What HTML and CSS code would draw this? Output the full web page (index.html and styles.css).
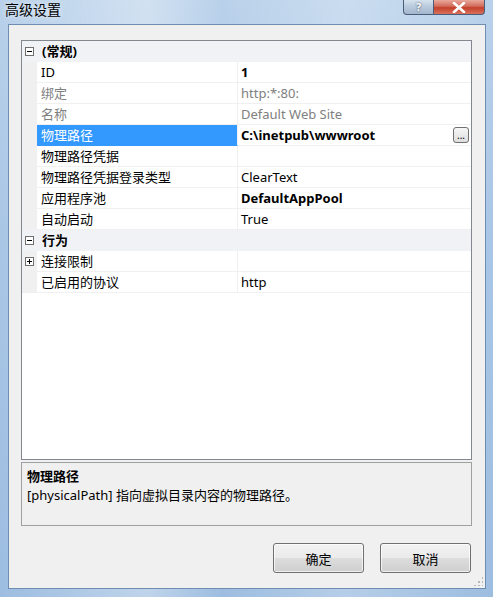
FILE: index.html
```html
<!DOCTYPE html>
<html lang="zh-CN">
<head>
<meta charset="utf-8">
<title>高级设置</title>
<link rel="stylesheet" href="styles.css">
</head>
<body>
<div class="window">
  <div class="titlebar">
    <span class="title">高级设置</span>
    <div class="caption-buttons">
      <div class="cap-btn help">?</div>
      <div class="cap-btn close">
        <svg width="14" height="11" viewBox="0 0 14 11"><path d="M2 1 L12 10 M12 1 L2 10" stroke="#fff" stroke-width="2.6" stroke-linecap="round"/></svg>
      </div>
    </div>
  </div>
  <div class="client">
    <div class="propgrid">
      <div class="row category">
        <div class="gutter"><span class="exp minus"></span></div>
        <div class="cat-label">(常规)</div>
      </div>
      <div class="row">
        <div class="gutter"></div>
        <div class="name">ID</div>
        <div class="value bold">1</div>
      </div>
      <div class="row dim">
        <div class="gutter"></div>
        <div class="name">绑定</div>
        <div class="value">http:*:80:</div>
      </div>
      <div class="row dim">
        <div class="gutter"></div>
        <div class="name">名称</div>
        <div class="value">Default Web Site</div>
      </div>
      <div class="row selected">
        <div class="gutter"></div>
        <div class="name">物理路径</div>
        <div class="value bold">C:\inetpub\wwwroot<span class="ellipsis">...</span></div>
      </div>
      <div class="row">
        <div class="gutter"></div>
        <div class="name">物理路径凭据</div>
        <div class="value"></div>
      </div>
      <div class="row">
        <div class="gutter"></div>
        <div class="name">物理路径凭据登录类型</div>
        <div class="value">ClearText</div>
      </div>
      <div class="row">
        <div class="gutter"></div>
        <div class="name">应用程序池</div>
        <div class="value bold">DefaultAppPool</div>
      </div>
      <div class="row">
        <div class="gutter"></div>
        <div class="name">自动启动</div>
        <div class="value">True</div>
      </div>
      <div class="row category">
        <div class="gutter"><span class="exp minus"></span></div>
        <div class="cat-label">行为</div>
      </div>
      <div class="row">
        <div class="gutter"><span class="exp plus"></span></div>
        <div class="name">连接限制</div>
        <div class="value"></div>
      </div>
      <div class="row">
        <div class="gutter"></div>
        <div class="name">已启用的协议</div>
        <div class="value">http</div>
      </div>
      <div class="grid-fill"></div>
    </div>
    <div class="description">
      <div class="desc-title">物理路径</div>
      <div class="desc-text">[physicalPath] 指向虚拟目录内容的物理路径。</div>
    </div>
    <div class="buttons">
      <button class="btn">确定</button>
      <button class="btn">取消</button>
    </div>
    <div class="grip"></div>
  </div>
</div>
</body>
</html>
```
FILE: styles.css
```css
html, body {
  margin: 0;
  padding: 0;
  width: 493px;
  height: 597px;
  overflow: hidden;
}
body {
  font-family: "Noto Sans", "Noto Sans CJK SC", sans-serif;
  font-size: 13px;
  color: #000;
  background: linear-gradient(to bottom, #b9d1ea 0%, #a9c6e6 40%, #9dbde0 100%);
}
.window {
  display: flex;
  flex-direction: column;
  height: 597px;
  background:
    linear-gradient(to right, rgba(255,255,255,0) 0%, rgba(255,255,255,0.35) 30%, rgba(255,255,255,0) 45%, rgba(255,255,255,0.25) 70%, rgba(255,255,255,0) 100%);
}
.titlebar {
  height: 24px;
  display: flex;
  align-items: flex-start;
  flex: none;
}
.title {
  padding-left: 5px;
  font-size: 14px;
  line-height: 19px;
  color: #000;
  font-family: "Noto Sans CJK SC", sans-serif;
  text-shadow: 0 0 6px rgba(255,255,255,0.9);
}
.caption-buttons {
  margin-left: auto;
  margin-right: 8px;
  display: flex;
}
.cap-btn {
  height: 15px;
  border: 1px solid #4a5d78;
  border-top: none;
  display: flex;
  align-items: center;
  justify-content: center;
  box-sizing: border-box;
}
.help {
  width: 31px;
  border-radius: 0 0 0 4px;
  background: linear-gradient(to bottom, #d6e2ef 0%, #b8c9dc 50%, #a3b6cc 100%);
  color: #fff;
  font-weight: bold;
  font-size: 11px;
  line-height: 14px;
  text-shadow: 0 0 2px #334;
}
.close {
  width: 51px;
  border-left: none;
  border-radius: 0 0 4px 0;
  background: linear-gradient(to bottom, #e9a99c 0%, #d16b5a 45%, #c4402b 55%, #d9715c 100%);
}
.client {
  flex: 1;
  margin: 0 7px 8px 8px;
  border: 1px solid #6f8db0;
  background: #f0f0f0;
  padding: 15px 13px 15px 12px;
  display: flex;
  flex-direction: column;
  position: relative;
}
.propgrid {
  height: 420px;
  box-sizing: border-box;
  border: 1px solid #828790;
  background: #fff;
  display: flex;
  flex-direction: column;
  flex: none;
}
.row {
  height: 21px;
  display: grid;
  grid-template-columns: 15px 201px 1fr;
  line-height: 20px;
  flex: none;
}
.gutter {
  background: #f0f0f0;
  display: flex;
  align-items: center;
  justify-content: center;
}
.name {
  padding-left: 4px;
  border-right: 1px solid #f0f0f0;
  border-bottom: 1px solid #f0f0f0;
  white-space: nowrap;
}
.value {
  padding-left: 3px;
  border-bottom: 1px solid #f0f0f0;
  white-space: nowrap;
  display: flex;
  align-items: center;
}
.bold { font-weight: bold; }
.dim .name, .dim .value { color: #808080; }
.selected .name {
  background: #3399ff;
  color: #fff;
  border-bottom-color: #3399ff;
}
.ellipsis {
  margin-left: auto;
  margin-right: 2px;
  width: 14px;
  height: 14px;
  border: 1px solid #707070;
  border-radius: 3px;
  background: linear-gradient(to bottom, #f6f6f6, #dedede);
  font-size: 10px;
  font-weight: normal;
  line-height: 14px;
  text-align: center;
  color: #000;
}
.category {
  background: #f0f2f5;
  grid-template-columns: 15px 1fr;
}
.category .gutter { background: transparent; }
.cat-label {
  padding-left: 5px;
  font-weight: bold;
}
.exp {
  width: 7px;
  height: 7px;
  border: 1px solid #6f6f6f;
  position: relative;
  background: #fff;
}
.exp::before {
  content: "";
  position: absolute;
  left: 1px;
  top: 3px;
  width: 5px;
  height: 1px;
  background: #000;
}
.plus::after {
  content: "";
  position: absolute;
  left: 3px;
  top: 1px;
  width: 1px;
  height: 5px;
  background: #000;
}
.grid-fill { flex: 1; }
.description {
  margin-top: 2px;
  height: 64px;
  box-sizing: border-box;
  border: 1px solid #a0a0a0;
  background: #f0f0f0;
  padding: 4px 5px;
  flex: none;
  line-height: 19px;
}
.desc-title { font-weight: bold; }
.buttons {
  margin-top: 17px;
  display: flex;
  justify-content: flex-end;
  gap: 16px;
  padding-right: 1px;
}
.btn {
  width: 91px;
  height: 30px;
  border: 1px solid #707070;
  border-radius: 3px;
  background: linear-gradient(to bottom, #f2f2f2 0%, #ebebeb 49%, #dddddd 50%, #cfcfcf 100%);
  box-shadow: inset 0 0 0 1px rgba(255,255,255,0.7);
  font-family: "Noto Sans CJK SC", sans-serif;
  font-size: 13px;
  color: #000;
  padding: 0;
}
.grip {
  position: absolute;
  right: 2px;
  bottom: 2px;
  width: 10px;
  height: 10px;
  background-image: radial-gradient(circle, #b8b8b8 1px, transparent 1.2px);
  background-size: 4px 4px;
  clip-path: polygon(100% 0, 100% 100%, 0 100%);
}
```
